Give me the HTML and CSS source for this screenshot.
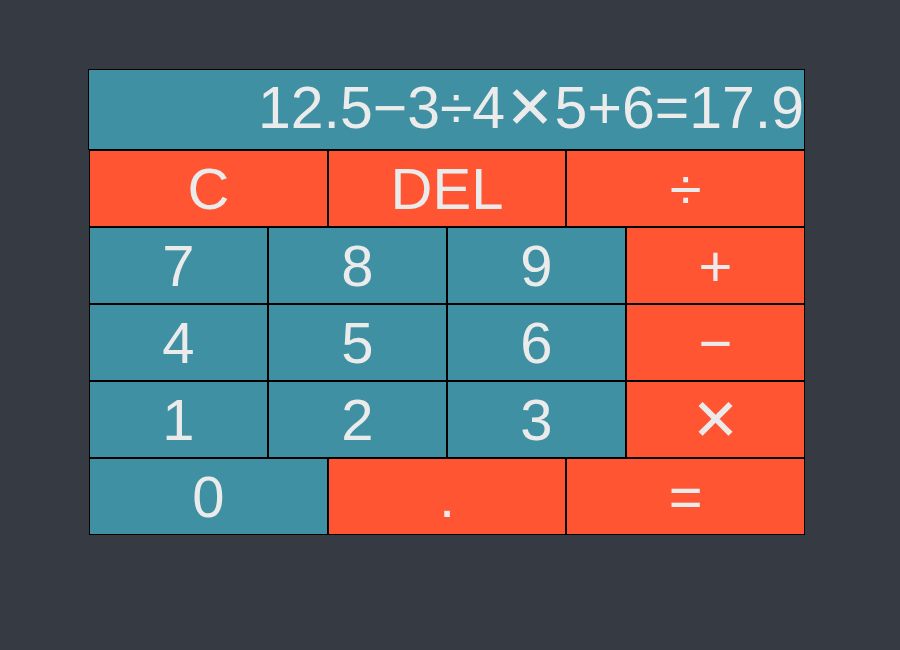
FILE: index.html
```html
<!DOCTYPE html>
<html>
<head>
<meta charset="utf-8">
<link rel="stylesheet" href="styles.css">
</head>
<body>
<div class="calc">
  <div class="display">12.5−3÷4✕5+6=17.9</div>
  <div class="keys">
    <div class="key op w4">C</div>
    <div class="key op w4">DEL</div>
    <div class="key op w4">÷</div>
    <div class="key num w3">7</div>
    <div class="key num w3">8</div>
    <div class="key num w3">9</div>
    <div class="key op w3">+</div>
    <div class="key num w3">4</div>
    <div class="key num w3">5</div>
    <div class="key num w3">6</div>
    <div class="key op w3">−</div>
    <div class="key num w3">1</div>
    <div class="key num w3">2</div>
    <div class="key num w3">3</div>
    <div class="key op w3">✕</div>
    <div class="key num w4">0</div>
    <div class="key op w4">.</div>
    <div class="key op w4">=</div>
  </div>
</div>
</body>
</html>
```
FILE: styles.css
```css
html, body {
  margin: 0;
  padding: 0;
  background: #363a42;
  height: 100%;
}
body {
  font-family: "Liberation Sans", Arial, "DejaVu Sans", sans-serif;
  color: #ebebeb;
}
.calc {
  padding: 69px 0 0 88px;
  width: 717px;
}
.display {
  box-sizing: border-box;
  width: 717px;
  height: 81px;
  border: 1px solid #000;
  background: #3f90a2;
  font-size: 59px;
  line-height: 76px;
  text-align: right;
  white-space: nowrap;
  overflow: hidden;
}
.keys {
  margin-left: 1px;
  width: 716px;
  display: grid;
  grid-template-columns: repeat(12, 1fr);
  grid-auto-rows: 77px;
}
.key {
  box-sizing: border-box;
  border: 1px solid #000;
  font-size: 58px;
  line-height: 75px;
  text-align: center;
}
.w4 { grid-column: span 4; }
.w3 { grid-column: span 3; }
.num { background: #3f90a2; }
.op { background: #ff5533; }
```
